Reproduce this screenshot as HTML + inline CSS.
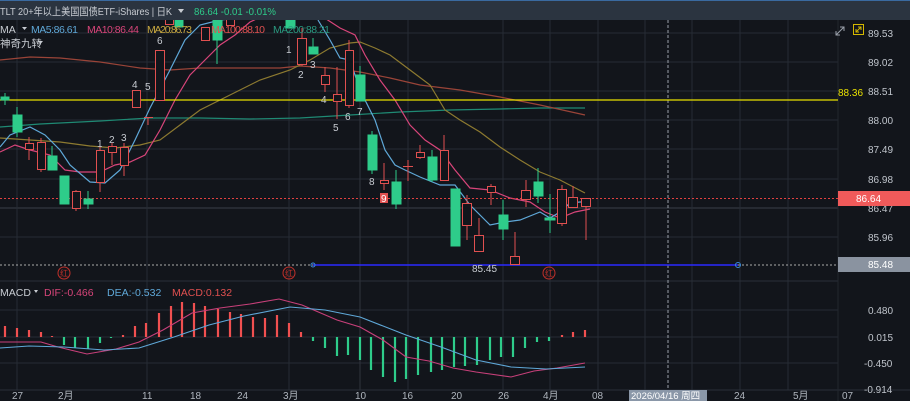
<!DOCTYPE html>
<html><head><meta charset="utf-8"><style>
html,body{margin:0;padding:0;background:#12151b;}
body{width:910px;height:401px;overflow:hidden;position:relative;font-family:"Liberation Sans","Noto Sans CJK SC",sans-serif;}
svg{position:absolute;left:0;top:0;}
</style></head><body>
<svg width="910" height="401" viewBox="0 0 910 401" xmlns="http://www.w3.org/2000/svg" font-family="Liberation Sans, Noto Sans CJK SC, sans-serif">
<rect width="910" height="401" fill="#12151b"/>
<g stroke="#262b34" stroke-width="1">
<line x1="0" y1="33" x2="838" y2="33"/><line x1="0" y1="62" x2="838" y2="62"/><line x1="0" y1="91" x2="838" y2="91"/><line x1="0" y1="120" x2="838" y2="120"/><line x1="0" y1="149" x2="838" y2="149"/><line x1="0" y1="179" x2="838" y2="179"/><line x1="0" y1="208" x2="838" y2="208" stroke="#3a404a"/><line x1="0" y1="237" x2="838" y2="237"/>
<line x1="0" y1="310" x2="838" y2="310"/><line x1="0" y1="337" x2="838" y2="337"/><line x1="0" y1="363" x2="838" y2="363"/>
<line x1="17" y1="20" x2="17" y2="390"/><line x1="147" y1="20" x2="147" y2="390"/><line x1="289" y1="20" x2="289" y2="390"/><line x1="360" y1="20" x2="360" y2="390" stroke="#30353e"/><line x1="408" y1="20" x2="408" y2="390"/><line x1="503" y1="20" x2="503" y2="390"/><line x1="550" y1="20" x2="550" y2="390"/><line x1="598" y1="20" x2="598" y2="390"/><line x1="645" y1="20" x2="645" y2="390"/><line x1="692" y1="20" x2="692" y2="390"/><line x1="740" y1="20" x2="740" y2="390"/><line x1="788" y1="20" x2="788" y2="390"/>
</g>
<line x1="0" y1="281" x2="838" y2="281" stroke="#2a2f38"/>
<line x1="0" y1="390" x2="910" y2="390" stroke="#2a2f38"/>
<line x1="838" y1="20" x2="838" y2="401" stroke="#22262e"/>
<line x1="668" y1="20" x2="668" y2="390" stroke="#9aa0a8" stroke-dasharray="3,2"/>

<g fill="none" stroke-width="1.2">
<polyline stroke="#1f8a74" points="0,127 40,124 100,121 150,118 200,118 250,119 300,118 350,115 400,112 450,110 500,109 540,108 585,108"/>
<polyline stroke="#9a4438" points="0,60 30,57 60,58 100,62 140,68 170,70 200,68 250,68 280,68 300,66 330,68 360,72 390,78 420,85 460,90 500,97 540,105 585,115"/>
<polyline stroke="#8d7a30" points="0,138 30,140 60,142 90,146 115,148 140,145 160,140 180,125 200,110 230,95 260,80 290,70 310,60 330,48 350,43 360,42 375,48 390,55 410,70 430,85 445,110 460,120 480,132 500,147 520,160 540,172 560,180 585,193"/>
<polyline stroke="#d8457a" points="0,152 15,145 30,150 50,155 65,170 80,172 100,172 115,165 130,162 145,155 160,130 175,100 190,75 205,60 220,45 235,35 250,22 265,15"/>
<polyline stroke="#d8457a" points="320,15 340,28 355,35 365,55 380,80 395,100 410,125 425,140 440,150 455,170 470,188 490,190 510,198 530,202 545,212 560,218 575,212 590,209"/>
<polyline stroke="#5fa8d8" points="0,147 10,135 30,127 45,135 60,150 70,165 90,182 105,183 120,170 135,140 150,108 170,70 185,40 200,25 220,20 250,17 260,15"/>
<polyline stroke="#5fa8d8" points="318,20 330,40 340,58 350,60 360,90 375,120 385,150 395,165 405,170 420,177 440,185 455,185 470,205 490,225 505,222 520,220 540,212 550,218 560,212 570,203 580,202 590,202"/>
</g>

<line x1="0" y1="100" x2="838" y2="100" stroke="#e8e000" stroke-width="1.3"/>
<line x1="0" y1="198.5" x2="838" y2="198.5" stroke="#e04040" stroke-dasharray="2,2"/>
<line x1="0" y1="265" x2="313" y2="265" stroke="#aaa" stroke-dasharray="2,2"/>
<line x1="738" y1="265" x2="838" y2="265" stroke="#aaa" stroke-dasharray="2,2"/>
<line x1="313" y1="265" x2="738" y2="265" stroke="#2a2aff" stroke-width="1.5"/>
<circle cx="313" cy="265" r="2" fill="none" stroke="#3a8ad8"/>
<circle cx="738" cy="265" r="2.5" fill="none" stroke="#3a8ad8"/>

<g stroke-width="1">
<g stroke="#2ecc8a" fill="#2ecc8a">
<line x1="5" y1="93" x2="5" y2="105"/><rect x="1" y="97" width="8" height="3"/>
<line x1="17" y1="107" x2="17" y2="137"/><rect x="13" y="115" width="9" height="17"/>
<line x1="52" y1="146" x2="52" y2="170"/><rect x="48" y="156" width="9" height="14"/>
<rect x="60" y="176" width="9" height="28"/>
<line x1="88" y1="191" x2="88" y2="209"/><rect x="84" y="199" width="9" height="5"/>
<rect x="175" y="20" width="8" height="7"/>
<line x1="217" y1="20" x2="217" y2="64"/><rect x="213" y="20" width="9" height="20"/>
<rect x="286" y="20" width="9" height="8"/>
<line x1="313" y1="38" x2="313" y2="54"/><rect x="309" y="47" width="9" height="7"/>
<line x1="360" y1="66" x2="360" y2="101"/><rect x="356" y="75" width="9" height="26"/>
<line x1="372" y1="131" x2="372" y2="174"/><rect x="368" y="135" width="9" height="35"/>
<line x1="396" y1="170" x2="396" y2="209"/><rect x="392" y="182" width="9" height="22"/>
<line x1="432" y1="150" x2="432" y2="182"/><rect x="428" y="157" width="9" height="23"/>
<rect x="451" y="189" width="9" height="57"/>
<line x1="503" y1="200" x2="503" y2="240"/><rect x="499" y="215" width="9" height="14"/>
<line x1="538" y1="168" x2="538" y2="203"/><rect x="534" y="182" width="9" height="14"/>
<line x1="550" y1="194" x2="550" y2="233"/><rect x="545" y="218" width="10" height="2"/>
</g>
<g stroke="#e05050" fill="#12151b">
<line x1="29" y1="137" x2="29" y2="160"/><rect x="25.5" y="143.5" width="8" height="6"/>
<line x1="41" y1="138" x2="41" y2="172"/><rect x="37.5" y="142.5" width="8" height="27"/>
<line x1="76" y1="190" x2="76" y2="211"/><rect x="72.5" y="191.5" width="8" height="17"/>
<line x1="100" y1="146" x2="100" y2="192"/><rect x="96.5" y="150.5" width="8" height="32"/>
<line x1="112" y1="143" x2="112" y2="165"/><rect x="108.5" y="146.5" width="8" height="6"/>
<line x1="124" y1="143" x2="124" y2="176"/><rect x="120.5" y="147.5" width="8" height="18"/>
<rect x="132.5" y="90.5" width="8" height="17"/>
<line x1="148" y1="117" x2="148" y2="125"/><line x1="144" y1="117.5" x2="153" y2="117.5"/>
<rect x="155.5" y="50.5" width="9" height="50"/>
<rect x="165.5" y="18.5" width="8" height="6"/>
<rect x="201.5" y="27.5" width="8" height="13"/>
<rect x="226.5" y="18.5" width="8" height="7"/>
<line x1="302" y1="28" x2="302" y2="66"/><rect x="297.5" y="38.5" width="9" height="26"/>
<line x1="325" y1="67" x2="325" y2="92"/><rect x="321.5" y="75.5" width="8" height="9"/>
<line x1="337" y1="67" x2="337" y2="119"/><rect x="333.5" y="94.5" width="8" height="7"/>
<line x1="349" y1="40" x2="349" y2="108"/><rect x="345.5" y="50.5" width="8" height="55"/>
<line x1="384" y1="163" x2="384" y2="190"/><rect x="380.5" y="180.5" width="8" height="3"/>
<line x1="408" y1="160" x2="408" y2="181"/><line x1="403" y1="166.5" x2="413" y2="166.5"/>
<line x1="420" y1="145" x2="420" y2="159"/><rect x="416.5" y="152.5" width="8" height="5"/>
<line x1="444" y1="135" x2="444" y2="181"/><rect x="440.5" y="150.5" width="8" height="30"/>
<line x1="467" y1="195" x2="467" y2="240"/><rect x="462.5" y="203.5" width="9" height="22"/>
<line x1="479" y1="218" x2="479" y2="252"/><rect x="474.5" y="235.5" width="9" height="16"/>
<line x1="491" y1="184" x2="491" y2="205"/><rect x="487.5" y="186.5" width="8" height="6"/>
<line x1="515" y1="232" x2="515" y2="265"/><rect x="510.5" y="256.5" width="9" height="8"/>
<line x1="526" y1="180" x2="526" y2="207"/><rect x="521.5" y="190.5" width="9" height="9"/>
<line x1="562" y1="185" x2="562" y2="226"/><rect x="557.5" y="189.5" width="9" height="34"/>
<line x1="573" y1="186" x2="573" y2="207"/><rect x="568.5" y="197.5" width="9" height="10"/>
<line x1="586" y1="198" x2="586" y2="240"/><rect x="581.5" y="198.5" width="9" height="8"/>
</g>
</g>

<g fill="#c8ccd2" font-size="10">
<text x="97" y="147">1</text><text x="109" y="143">2</text><text x="121" y="141">3</text>
<text x="132" y="88">4</text><text x="145" y="90">5</text><text x="157" y="44">6</text>
<text x="286" y="53">1</text><text x="298" y="78">2</text><text x="310" y="68">3</text>
<text x="321" y="103">4</text><text x="333" y="131">5</text><text x="345" y="120">6</text><text x="357" y="115">7</text>
<text x="369" y="185">8</text>
</g>
<rect x="380" y="193" width="8" height="10" fill="#e05050"/>
<text x="381" y="202" fill="#fff" font-size="10">9</text>
<text x="472" y="272" fill="#c8ccd2" font-size="10">85.45</text>
<g fill="none" stroke="#c0302a"><circle cx="64" cy="273" r="6"/><circle cx="289" cy="273" r="6"/><circle cx="549" cy="273" r="6"/></g>
<g fill="#c0302a" font-size="8"><text x="60" y="276">红</text><text x="285" y="276">红</text><text x="545" y="276">红</text></g>

<g stroke-width="2.2">
<g stroke="#f05050">
<line x1="5" y1="337" x2="5" y2="326"/><line x1="17" y1="337" x2="17" y2="328"/><line x1="29" y1="337" x2="29" y2="330"/><line x1="41" y1="337" x2="41" y2="332"/><line x1="52" y1="337" x2="52" y2="336"/>
<line x1="123" y1="337" x2="123" y2="335"/><line x1="135" y1="337" x2="135" y2="326"/><line x1="146" y1="337" x2="146" y2="323"/><line x1="159" y1="337" x2="159" y2="313"/><line x1="171" y1="337" x2="171" y2="306"/><line x1="182" y1="337" x2="182" y2="302"/><line x1="194" y1="337" x2="194" y2="303"/><line x1="205" y1="337" x2="205" y2="306"/><line x1="218" y1="337" x2="218" y2="309"/><line x1="230" y1="337" x2="230" y2="312"/><line x1="241" y1="337" x2="241" y2="314"/><line x1="253" y1="337" x2="253" y2="317"/><line x1="265" y1="337" x2="265" y2="318"/><line x1="277" y1="337" x2="277" y2="315"/><line x1="289" y1="337" x2="289" y2="323"/><line x1="301" y1="337" x2="301" y2="332"/>
<line x1="562" y1="337" x2="562" y2="335"/><line x1="573" y1="337" x2="573" y2="332"/><line x1="585" y1="337" x2="585" y2="330"/>
</g>
<g stroke="#2ecc8a">
<line x1="64" y1="337" x2="64" y2="345"/><line x1="75" y1="337" x2="75" y2="348"/><line x1="88" y1="337" x2="88" y2="349"/><line x1="100" y1="337" x2="100" y2="343"/><line x1="111" y1="337" x2="111" y2="338"/>
<line x1="313" y1="337" x2="313" y2="341"/><line x1="325" y1="337" x2="325" y2="348"/><line x1="337" y1="337" x2="337" y2="356"/><line x1="348" y1="337" x2="348" y2="355"/><line x1="360" y1="337" x2="360" y2="360"/><line x1="371" y1="337" x2="371" y2="370"/><line x1="383" y1="337" x2="383" y2="377"/><line x1="395" y1="337" x2="395" y2="382"/><line x1="406" y1="337" x2="406" y2="379"/><line x1="418" y1="337" x2="418" y2="375"/><line x1="431" y1="337" x2="431" y2="372"/><line x1="442" y1="337" x2="442" y2="370"/><line x1="454" y1="337" x2="454" y2="367"/><line x1="465" y1="337" x2="465" y2="366"/><line x1="477" y1="337" x2="477" y2="365"/><line x1="490" y1="337" x2="490" y2="360"/><line x1="501" y1="337" x2="501" y2="357"/><line x1="513" y1="337" x2="513" y2="357"/><line x1="525" y1="337" x2="525" y2="348"/><line x1="537" y1="337" x2="537" y2="342"/><line x1="549" y1="337" x2="549" y2="341"/>
</g>
</g>
<g fill="none" stroke-width="1.1">
<polyline stroke="#c8407a" points="0,342 41,342 58,347 87,354 116,349 139,342 163,330 192,313 220,308 250,304 279,299 302,305 337,320 360,327 383,340 406,357 429,361 453,368 476,372 511,377 534,371 557,368 585,363"/>
<polyline stroke="#5fa8d8" points="0,348 29,346 64,347 104,350 139,348 174,337 209,325 244,316 290,307 325,310 360,317 406,335 441,347 476,360 511,367 546,369 585,367"/>
</g>

<g fill="#c0c5cc" font-size="10">
<text x="868" y="37">89.53</text><text x="868" y="66">89.02</text><text x="868" y="95">88.51</text><text x="868" y="124">88.00</text><text x="868" y="153">87.49</text><text x="868" y="183">86.98</text><text x="868" y="212">86.47</text><text x="868" y="241">85.96</text>
<text x="868" y="314">0.480</text><text x="868" y="341">0.015</text><text x="864" y="367">-0.450</text><text x="864" y="393">-0.914</text>
</g>
<rect x="838" y="191" width="72" height="15" fill="#f05a5a"/>
<text x="856" y="202" fill="#fff" font-size="10">86.64</text>
<rect x="838" y="257" width="72" height="15" fill="#8a93a0"/>
<text x="868" y="268" fill="#fff" font-size="10">85.48</text>
<text x="838" y="96" fill="#e8e000" font-size="10">88.36</text>
<g stroke="#9aa0aa" fill="none" stroke-width="1"><line x1="836" y1="35" x2="844" y2="27"/><polyline points="836,31 836,35 840,35"/><polyline points="840,27 844,27 844,31"/></g>
<rect x="853.5" y="24.5" width="10" height="10" fill="none" stroke="#d4b800"/>
<g stroke="#d4b800" fill="none"><line x1="856" y1="32" x2="861" y2="27"/><polyline points="856,29 856,32 859,32"/><polyline points="858,27 861,27 861,30"/></g>

<g fill="#b0b6be" font-size="10">
<text x="12" y="399">27</text><text x="58" y="399">2月</text><text x="142" y="399">11</text><text x="190" y="399">18</text><text x="237" y="399">24</text><text x="283" y="399">3月</text><text x="355" y="399">10</text><text x="402" y="399">16</text><text x="451" y="399">20</text><text x="498" y="399">26</text><text x="543" y="399">4月</text><text x="592" y="399">08</text><text x="734" y="399">24</text><text x="793" y="399">5月</text><text x="842" y="399">07</text>
</g>
<rect x="629" y="390" width="78" height="11" fill="#8a97a8"/>
<text x="631" y="399" fill="#fff" font-size="9.5">2026/04/16 周四</text>

<rect x="0" y="0" width="910" height="20" fill="#2b3440"/>
<rect x="0" y="0" width="910" height="1" fill="#3a6aa0"/>
<text x="0" y="15" fill="#c8ccd2" font-size="10.5" textLength="172" lengthAdjust="spacingAndGlyphs">TLT 20+年以上美国国债ETF-iShares | 日K</text>
<path d="M178 9 L184 9 L181 13 Z" fill="#c8ccd2"/>
<text x="194" y="15" fill="#2ecc8a" font-size="10.5" textLength="82" lengthAdjust="spacingAndGlyphs">86.64 -0.01 -0.01%</text>

<g font-size="10.5">
<text x="0" y="33" fill="#c8ccd2">MA</text><path d="M22 27 L27 27 L24.5 30 Z" fill="#c8ccd2"/>
<text x="31" y="33" fill="#5fa8d8" textLength="47">MA5:86.61</text>
<text x="87" y="33" fill="#d8457a" textLength="52">MA10:86.44</text>
<text x="147" y="33" fill="#c8a840" textLength="45">MA20:86.73</text>
<text x="211" y="33" fill="#e05050" textLength="54">MA100:88.10</text>
<text x="273" y="33" fill="#2a9a80" textLength="57">MA200:88.21</text>
<text x="0" y="47" fill="#c8ccd2">神奇九转</text><path d="M38 41 L43 41 L40.5 44 Z" fill="#c8ccd2"/>
<text x="0" y="296" fill="#c8ccd2">MACD</text><path d="M34 290 L38 290 L36 293 Z" fill="#c8ccd2"/>
<text x="44" y="296" fill="#d8457a">DIF:-0.466</text>
<text x="107" y="296" fill="#5fa8d8">DEA:-0.532</text>
<text x="172" y="296" fill="#e05050">MACD:0.132</text>
</g>
</svg>
</body></html>
